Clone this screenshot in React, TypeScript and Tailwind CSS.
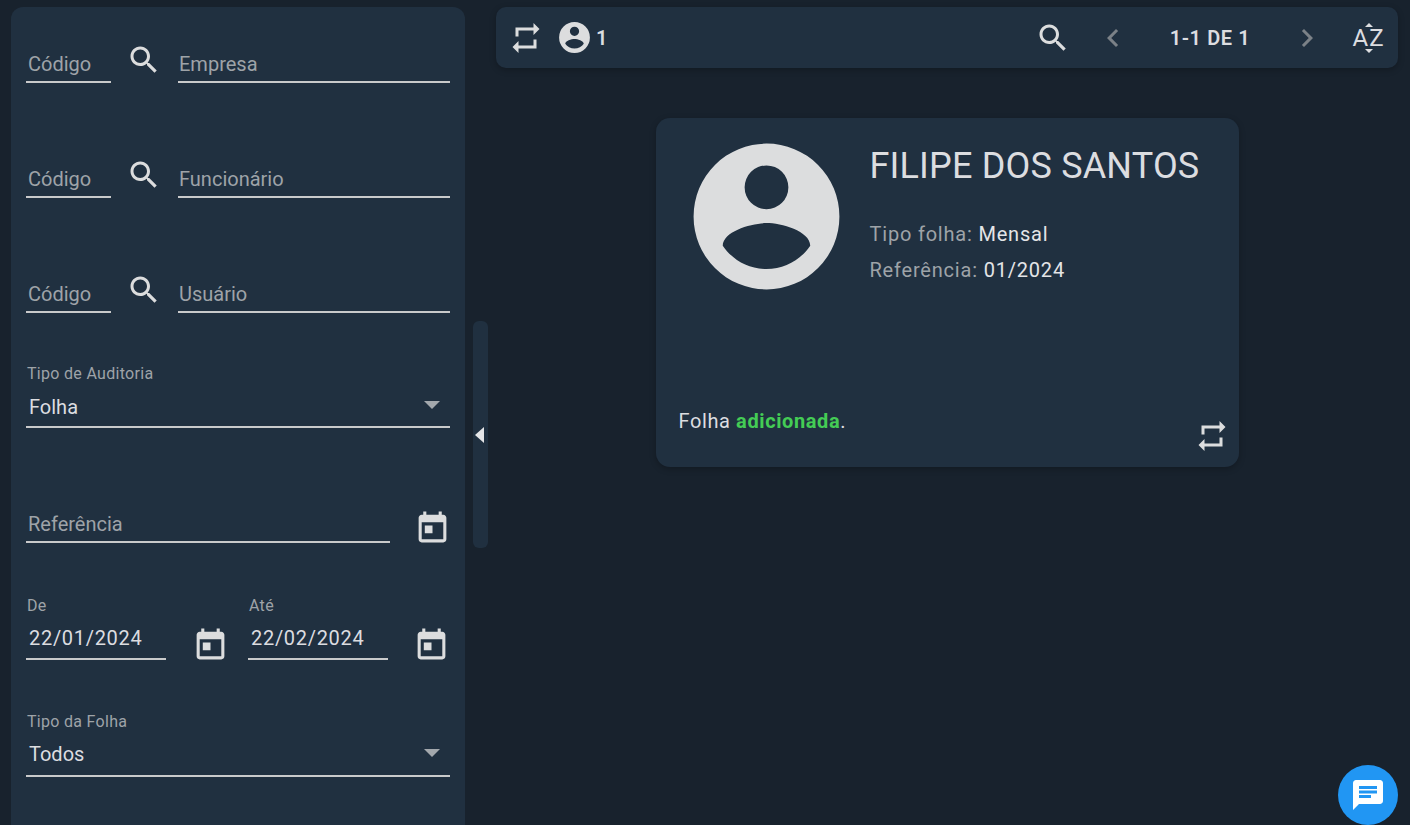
const ICON = "#dcddde";

function Search({ className = "" }: { className?: string }) {
  return (
    <svg viewBox="0 0 24 24" className={`w-9 h-9 shrink-0 ${className}`} fill={ICON}>
      <path d="M15.5 14h-.79l-.28-.27C15.41 12.59 16 11.11 16 9.5 16 5.91 13.09 3 9.5 3S3 5.91 3 9.5 5.91 16 9.5 16c1.61 0 3.09-.59 4.23-1.57l.27.28v.79l5 4.99L20.49 19l-4.99-5zm-6 0C7.01 14 5 11.99 5 9.5S7.01 5 9.5 5 14 7.01 14 9.5 11.99 14 9.5 14z" />
    </svg>
  );
}

function Repeat({ className = "" }: { className?: string }) {
  return (
    <svg viewBox="0 0 24 24" className={`w-9 h-9 shrink-0 ${className}`} fill={ICON}>
      <path d="M7 7h10v3l4-4-4-4v3H5v6h2V7zm10 10H7v-3l-4 4 4 4v-3h12v-6h-2v4z" />
    </svg>
  );
}

function Calendar({ className = "" }: { className?: string }) {
  return (
    <svg viewBox="0 0 24 24" className={`w-[37px] h-[37px] shrink-0 ${className}`} fill={ICON}>
      <path d="M19 3h-1V1h-2v2H8V1H6v2H5c-1.11 0-1.99.9-1.99 2L3 19c0 1.1.89 2 2 2h14c1.1 0 2-.9 2-2V5c0-1.1-.9-2-2-2zm0 16H5V8h14v11zM7 10h5v5H7z" />
    </svg>
  );
}

function Account({ className = "" }: { className?: string }) {
  return (
    <svg viewBox="0 0 24 24" className={`shrink-0 ${className}`} fill={ICON}>
      <path d="M12,19.2C9.5,19.2 7.29,17.92 6,16C6.03,14 10,12.9 12,12.9C14,12.9 17.97,14 18,16C16.71,17.92 14.5,19.2 12,19.2M12,5A3,3 0 0,1 15,8A3,3 0 0,1 12,11A3,3 0 0,1 9,8A3,3 0 0,1 12,5M12,2A10,10 0 0,0 2,12A10,10 0 0,0 12,22A10,10 0 0,0 22,12A10,10 0 0,0 12,2Z" />
    </svg>
  );
}

function Caret() {
  return (
    <svg viewBox="0 0 16 8" className="w-4 h-2 shrink-0" fill="#a3a8ad">
      <path d="M0 0h16l-8 8z" />
    </svg>
  );
}

// campo com placeholder dentro da linha
function TextField({ label, className }: { label: string; className: string }) {
  return (
    <div className={`h-[40px] border-b-2 border-[#c9cacb] pt-[7px] text-[20px] leading-[28px] text-[#9ea3a8] ${className}`}>
      {label}
    </div>
  );
}

// campo com rotulo pequeno em cima
function LabelField({ label, value, className }: { label: string; value: string; className: string }) {
  return (
    <div className={className}>
      <div className="pl-px text-[16px] leading-[20px] tracking-[0.3px] text-[#9ea3a8]">{label}</div>
      <div className="mt-[8px] h-[36px] border-b-2 border-[#c9cacb] pl-[3px] pt-[1px] text-[20px] leading-[26px] tracking-[0.7px] text-[#dcdde0]">
        {value}
      </div>
    </div>
  );
}

function SelectField({ label, value, gap, pad, caret }: { label: string; value: string; gap: string; pad: string; caret: string }) {
  return (
    <div className="w-full">
      <div className="pl-px text-[16px] leading-[20px] tracking-[0.3px] text-[#9ea3a8]">{label}</div>
      <div className={`flex h-[36px] justify-between border-b-2 border-[#c9cacb] pl-[3px] pr-[10px] text-[20px] leading-[26px] text-[#dcdde0] ${gap} ${pad}`}>
        <span>{value}</span>
        <span className={caret}><Caret /></span>
      </div>
    </div>
  );
}

function SearchRow({ label, height }: { label: string; height: string }) {
  return (
    <div className={`flex items-end ${height}`}>
      <TextField label="Código" className="w-[85px] pl-[2px]" />
      <Search className="ml-[15px] mr-[16px] mb-[5px]" />
      <TextField label={label} className="flex-1 pl-[1px]" />
    </div>
  );
}

function Sidebar() {
  return (
    <aside className="mt-[7px] ml-[11px] h-[830px] w-[454px] shrink-0 rounded-t-[12px] bg-[#203040] px-[15px]">
      <SearchRow label="Empresa" height="h-[76px]" />
      <SearchRow label="Funcionário" height="h-[115px]" />
      <SearchRow label="Usuário" height="h-[115px]" />
      <div className="flex h-[115px] items-end">
        <SelectField label="Tipo de Auditoria" value="Folha" gap="mt-[8px]" pad="pt-[2px]" caret="pt-[7px]" />
      </div>
      <div className="flex h-[115px] items-end">
        <TextField label="Referência" className="w-[364px] shrink-0 pl-[2px]" />
        <Calendar className="ml-[24px] -mr-[1px] -mb-[4px]" />
      </div>
      <div className="flex h-[117px] items-end">
        <LabelField label="De" value="22/01/2024" className="w-[140px]" />
        <Calendar className="ml-[26px] -mb-[4px]" />
        <LabelField label="Até" value="22/02/2024" className="ml-[19px] w-[140px]" />
        <Calendar className="ml-[25px] -mb-[4px]" />
      </div>
      <div className="flex h-[117px] items-end">
        <SelectField label="Tipo da Folha" value="Todos" gap="mt-[9px]" pad="pt-0" caret="pt-[8px]" />
      </div>
    </aside>
  );
}

function Splitter() {
  return (
    <div className="mx-[8px] mt-[321px] flex h-[227px] w-[15px] shrink-0 items-center rounded-[6px] bg-[#203040] pl-[2px]">
      <svg viewBox="0 0 9 16" className="h-4 w-[9px]" fill="#e4e5e7">
        <path d="M9 0v16L0 8z" />
      </svg>
    </div>
  );
}

function SortIcon() {
  return (
    <div className="relative ml-[25px] flex h-9 w-9 items-center justify-center text-[24px] leading-none text-[#dcdde0]">
      <span>A</span>
      <span className="ml-[1px]">Z</span>
      <span className="absolute left-[15px] top-[3px] h-0 w-0 border-x-[4px] border-b-[4px] border-x-transparent border-b-[#dcdde0]" />
      <span className="absolute left-[15px] bottom-[3px] h-0 w-0 border-x-[4px] border-t-[4px] border-x-transparent border-t-[#dcdde0]" />
    </div>
  );
}

function Toolbar() {
  return (
    <header className="mt-[7px] flex h-[61px] items-center rounded-[10px] bg-[#203040] pl-[12px] pr-[12px] shadow-[0_2px_6px_rgba(0,0,0,0.25)]">
      <Repeat />
      <Account className="ml-[12px] h-[37px] w-[37px]" />
      <span className="ml-[3px] text-[20px] font-semibold text-[#dcdde0]">1</span>
      <div className="ml-auto flex items-center">
        <Search />
        <svg viewBox="0 0 24 24" className="ml-[24px] h-9 w-9" fill="#7b8187">
          <path d="M15.41 7.41L14 6l-6 6 6 6 1.41-1.41L10.83 12z" />
        </svg>
        <span className="w-[158px] text-center text-[20px] font-semibold tracking-[0.6px] text-[#dcdde0]">1-1 DE 1</span>
        <svg viewBox="0 0 24 24" className="h-9 w-9" fill="#7b8187">
          <path d="M10 6L8.59 7.41 13.17 12l-4.58 4.59L10 18l6-6z" />
        </svg>
        <SortIcon />
      </div>
    </header>
  );
}

function Card() {
  return (
    <article className="mx-auto mt-[50px] flex h-[349px] w-[583px] flex-col rounded-[14px] bg-[#203040] shadow-[0_2px_6px_rgba(0,0,0,0.25)]">
      <div className="flex flex-1">
        <Account className="ml-[23px] mt-[11px] h-[175px] w-[175px]" />
        <div className="ml-[16px] pt-[25px]">
          <h2 className="text-[36px] font-normal leading-[46px] tracking-[0.18px] text-[#dcdde0]">FILIPE DOS SANTOS</h2>
          <p className="mt-[27px] text-[20px] leading-[36px] tracking-[0.8px] text-[#9ea3a8]">
            Tipo folha: <span className="text-[#e4e5e7]">Mensal</span>
          </p>
          <p className="text-[20px] leading-[36px] tracking-[0.8px] text-[#9ea3a8]">
            Referência: <span className="text-[#e4e5e7]">01/2024</span>
          </p>
        </div>
      </div>
      <div className="flex items-start justify-between pl-[23px] pr-[9px] pb-[13px]">
        <p className="text-[20px] leading-[28px] tracking-[0.6px] text-[#dcdde0]">
          Folha <span className="font-bold text-[#44cc55]">adicionada</span>.
        </p>
        <Repeat className="mt-[11px]" />
      </div>
    </article>
  );
}

export default function App() {
  return (
    <div className="relative flex h-[825px] w-[1410px] overflow-hidden bg-[#18222d] font-['Roboto',sans-serif]">
      <Sidebar />
      <Splitter />
      <main className="w-[902px] shrink-0">
        <Toolbar />
        <Card />
      </main>
      <button className="absolute bottom-0 left-[1338px] flex h-[60px] w-[60px] items-center justify-center rounded-full bg-[#2196f3]">
        <svg viewBox="0 0 24 24" className="h-9 w-9" fill="#ffffff">
          <path d="M20 2H4c-1.1 0-1.99.9-1.99 2L2 22l4-4h14c1.1 0 2-.9 2-2V4c0-1.1-.9-2-2-2zM6 9h12v2H6V9zm8 5H6v-2h8v2zm4-6H6V6h12v2z" />
        </svg>
      </button>
    </div>
  );
}
